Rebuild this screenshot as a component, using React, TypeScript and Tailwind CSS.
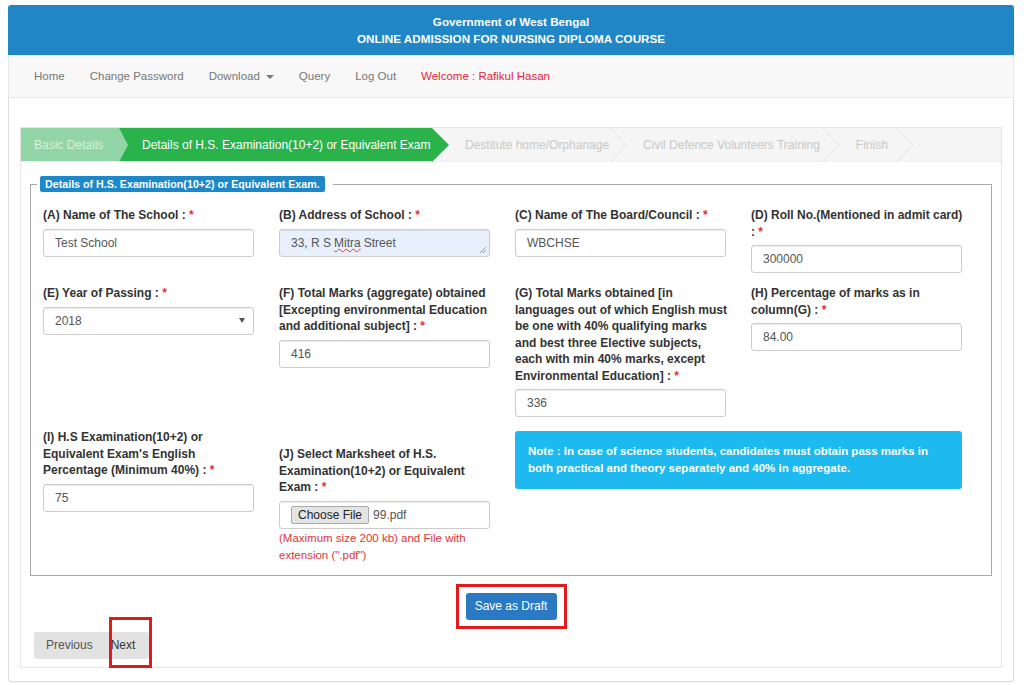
import React from "react";

const font = { fontFamily: "'Liberation Sans', Arial, sans-serif" };

const Req = () => <span className="text-[#e03131]"> *</span>;

const Label = ({ children }: { children: React.ReactNode }) => (
  <div className="text-[12px] leading-[16.5px] font-bold text-[#333] mb-[5px]">
    {children}
    <Req />
  </div>
);

const Box = ({ children, className = "" }: { children: React.ReactNode; className?: string }) => (
  <div
    className={`relative h-[28px] w-[211px] border border-[#ccc] rounded-[3px] shadow-[inset_0_1px_1px_rgba(0,0,0,0.075)] flex items-center pl-[11px] text-[12px] text-[#555] ${className}`}
  >
    {children}
  </div>
);

const Chevron = () => (
  <svg width="18" height="34" viewBox="0 0 18 34" className="shrink-0">
    <polyline points="1,0 17,17 1,34" fill="none" stroke="#e3e3e3" strokeWidth="1" />
  </svg>
);

export default function App() {
  return (
    <div style={font} className="min-h-[685px] bg-white pt-[5px]">
      <div className="ml-[8px] w-[1006px]">
        {/* header */}
        <div className="h-[50px] bg-[#2086c6] rounded-t-[3px] flex flex-col items-center justify-center text-white text-[11.7px] font-bold leading-[17px]">
          <div>Government of West Bengal</div>
          <div>ONLINE ADMISSION FOR NURSING DIPLOMA COURSE</div>
        </div>

        {/* nav */}
        <div className="h-[43px] bg-[#f8f8f8] border border-[#e7e7e7] flex items-center pl-[25px] gap-[25px] text-[11.5px] text-[#777]">
          <span>Home</span>
          <span>Change Password</span>
          <span className="flex items-center gap-[6px]">
            Download
            <span className="w-0 h-0 border-l-[4px] border-r-[4px] border-t-[4px] border-l-transparent border-r-transparent border-t-[#777]" />
          </span>
          <span>Query</span>
          <span>Log Out</span>
          <span className="text-[#e8253d]">Welcome : Rafikul Hasan</span>
        </div>

        {/* body */}
        <div className="border-x border-b border-[#ddd] rounded-b-[4px] shadow-[0_1px_2px_rgba(0,0,0,0.05)] px-[11px] pt-[29px] pb-[13px]">
          <div className="border border-[#e6e6e6]">
            {/* steps */}
            <div className="flex h-[34px] bg-[#f5f5f5] text-[12px] border-b border-[#eee]">
              <div className="relative z-20 w-[98px] bg-[#92d5a6] pl-[13px] flex items-center text-[#d6f1dd]">
                Basic Details
                <span className="absolute left-full top-0 w-0 h-0 border-l-[9px] border-y-[17px] border-l-[#92d5a6] border-y-transparent" />
              </div>
              <div className="relative z-10 w-[313px] bg-[#2bb34b] pl-[23px] flex items-center text-white">
                Details of H.S. Examination(10+2) or Equivalent Exam
                <span className="absolute left-full top-0 w-0 h-0 border-l-[17px] border-y-[17px] border-l-[#2bb34b] border-y-transparent" />
              </div>
              <div className="flex items-center pl-[33px] text-[#c8c8c8]">
                <span className="pr-[0px]">Destitute home/Orphanage</span>
                <Chevron />
                <span className="pl-[16px] pr-[2px]">Civil Defence Volunteers Training</span>
                <Chevron />
                <span className="pl-[16px] pr-[8px]">Finish</span>
                <Chevron />
              </div>
            </div>

            <div className="px-[9px] pt-[14px] pb-[8px]">
              <fieldset className="border border-[#a9a9a9] pl-[12px] pr-[4px] pt-[15px] pb-[11px]">
                <legend className="ml-[-6px] pl-[3px] pr-[8px]">
                  <span className="block bg-[#1c87c9] text-white text-[10.7px] font-bold leading-[16px] px-[5px] rounded-[2px]">
                    Details of H.S. Examination(10+2) or Equivalent Exam.
                  </span>
                </legend>

                {/* row 1 */}
                <div className="grid grid-cols-[repeat(4,212px)] gap-x-[24px] items-start mb-[12px]">
                  <div>
                    <Label>(A) Name of The School :</Label>
                    <Box>Test School</Box>
                  </div>
                  <div>
                    <Label>(B) Address of School :</Label>
                    <Box className="bg-[#e8f0fe] text-[#222]">
                      33, R S{" "}
                      <span className="mx-[3px] underline decoration-wavy decoration-[#e03131] decoration-[1px]">Mitra</span>{" "}
                      Street
                      <svg width="8" height="8" viewBox="0 0 8 8" className="absolute right-[2px] bottom-[2px]">
                        <line x1="7" y1="1" x2="1" y2="7" stroke="#999" />
                        <line x1="7" y1="4" x2="4" y2="7" stroke="#999" />
                      </svg>
                    </Box>
                  </div>
                  <div>
                    <Label>(C) Name of The Board/Council :</Label>
                    <Box>WBCHSE</Box>
                  </div>
                  <div>
                    <Label>(D) Roll No.(Mentioned in admit card) :</Label>
                    <Box>300000</Box>
                  </div>
                </div>

                {/* row 2 */}
                <div className="grid grid-cols-[repeat(4,212px)] gap-x-[24px] items-start mb-[12px]">
                  <div>
                    <Label>(E) Year of Passing :</Label>
                    <Box className="justify-between pr-[8px]">
                      <span>2018</span>
                      <span className="w-0 h-0 border-l-[3px] border-r-[3px] border-t-[5px] border-l-transparent border-r-transparent border-t-[#555]" />
                    </Box>
                  </div>
                  <div>
                    <Label>(F) Total Marks (aggregate) obtained [Excepting environmental Education and additional subject] :</Label>
                    <Box>416</Box>
                  </div>
                  <div>
                    <Label>
                      (G) Total Marks obtained [in languages out of which English must be one with 40% qualifying marks and best three Elective subjects, each with min 40% marks, except Environmental Education] :
                    </Label>
                    <Box>336</Box>
                  </div>
                  <div>
                    <Label>(H) Percentage of marks as in column(G) :</Label>
                    <Box>84.00</Box>
                  </div>
                </div>

                {/* row 3 */}
                <div className="grid grid-cols-[repeat(4,212px)] gap-x-[24px] items-start">
                  <div>
                    <Label>(I) H.S Examination(10+2) or Equivalent Exam's English Percentage (Minimum 40%) :</Label>
                    <Box>75</Box>
                  </div>
                  <div className="pt-[17px]">
                    <Label>(J) Select Marksheet of H.S. Examination(10+2) or Equivalent Exam :</Label>
                    <Box className="gap-[4px] pl-[10px]">
                      <span className="h-[18px] px-[6px] bg-[#e4e4e4] border border-[#aaa] rounded-[2px] text-[12px] text-[#222] flex items-center">
                        Choose File
                      </span>
                      <span>99.pdf</span>
                    </Box>
                    <div className="text-[11.5px] leading-[17px] text-[#e0343a] mt-[1px]">
                      (Maximum size 200 kb) and File with extension (".pdf")
                    </div>
                  </div>
                  <div className="col-span-2 mt-[2px] w-[447px] bg-[#1eb9ee] rounded-[3px] px-[13px] py-[12px] text-white text-[11.5px] font-bold leading-[17px]">
                    Note : In case of science students, candidates must obtain pass marks in both practical and theory separately and 40% in aggregate.
                  </div>
                </div>
              </fieldset>

              <div className="flex justify-center mt-[8px]">
                <div className="border-[3px] border-[#e01b1b] px-[7px] py-[6px]">
                  <button className="h-[27px] w-[91px] bg-[#2a79c2] text-white text-[12px] rounded-[3px]">
                    Save as Draft
                  </button>
                </div>
              </div>

              <div className="relative mt-[3px] ml-[4px] flex">
                <div className="h-[27px] bg-[#e2e2e2] rounded-[3px] flex items-center text-[12px] text-[#555]">
                  <span className="pl-[12px] pr-[18px]">Previous</span>
                  <span className="pr-[14px] text-[#333]">Next</span>
                </div>
                <div className="absolute left-[75px] top-[-15px] w-[43px] h-[51px] border-[3px] border-[#e01b1b]" />
              </div>
            </div>
          </div>
        </div>
      </div>
    </div>
  );
}
